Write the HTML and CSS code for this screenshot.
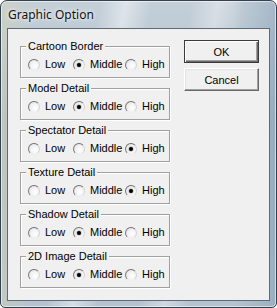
FILE: index.html
```html
<!DOCTYPE html>
<html>
<head>
<meta charset="utf-8">
<link rel="stylesheet" href="styles.css">
</head>
<body>
<div class="window">
  <div class="titlebar"><span class="title">Graphic Option</span></div>
  <div class="client">
    <div class="groups">
      <fieldset class="group">
        <legend>Cartoon Border</legend>
        <div class="row">
          <label class="opt w1"><span class="radio"></span>Low</label>
          <label class="opt w2"><span class="radio on"></span>Middle</label>
          <label class="opt"><span class="radio"></span>High</label>
        </div>
      </fieldset>
      <fieldset class="group">
        <legend>Model Detail</legend>
        <div class="row">
          <label class="opt w1"><span class="radio"></span>Low</label>
          <label class="opt w2"><span class="radio on"></span>Middle</label>
          <label class="opt"><span class="radio"></span>High</label>
        </div>
      </fieldset>
      <fieldset class="group">
        <legend>Spectator Detail</legend>
        <div class="row">
          <label class="opt w1"><span class="radio"></span>Low</label>
          <label class="opt w2"><span class="radio"></span>Middle</label>
          <label class="opt"><span class="radio on"></span>High</label>
        </div>
      </fieldset>
      <fieldset class="group">
        <legend>Texture Detail</legend>
        <div class="row">
          <label class="opt w1"><span class="radio"></span>Low</label>
          <label class="opt w2"><span class="radio"></span>Middle</label>
          <label class="opt"><span class="radio on"></span>High</label>
        </div>
      </fieldset>
      <fieldset class="group">
        <legend>Shadow Detail</legend>
        <div class="row">
          <label class="opt w1"><span class="radio"></span>Low</label>
          <label class="opt w2"><span class="radio on"></span>Middle</label>
          <label class="opt"><span class="radio"></span>High</label>
        </div>
      </fieldset>
      <fieldset class="group">
        <legend>2D Image Detail</legend>
        <div class="row">
          <label class="opt w1"><span class="radio"></span>Low</label>
          <label class="opt w2"><span class="radio on"></span>Middle</label>
          <label class="opt"><span class="radio"></span>High</label>
        </div>
      </fieldset>
    </div>
    <div class="buttons">
      <button class="btn default">OK</button>
      <button class="btn">Cancel</button>
    </div>
  </div>
</div>
</body>
</html>
```

FILE: styles.css
```css
html, body {
  margin: 0;
  padding: 0;
  background: #fff;
}

.window {
  box-sizing: border-box;
  width: 277px;
  height: 308px;
  border: 1px solid #34424f;
  border-radius: 7px 7px 5px 5px;
  padding: 0 6px 6px;
  background:
    linear-gradient(100deg, rgba(255,255,255,0) 30%, rgba(255,255,255,0.45) 38%, rgba(255,255,255,0) 46%, rgba(255,255,255,0) 58%, rgba(255,255,255,0.35) 66%, rgba(255,255,255,0) 74%),
    linear-gradient(90deg, rgba(220,214,170,0.35) 0%, rgba(220,214,170,0) 12%, rgba(0,0,0,0) 85%, rgba(110,140,170,0.35) 100%),
    linear-gradient(180deg, #c4cfd8 0%, #aebdca 40%, #b5c3cf 100%);
  box-shadow: inset 0 0 0 1px rgba(255,255,255,0.55);
  overflow: hidden;
}

.titlebar {
  height: 27px;
  display: flex;
  align-items: center;
  padding-left: 1px;
}

.title {
  font-family: "Noto Sans", "Open Sans", sans-serif;
  font-size: 12px;
  color: #111;
  text-shadow: 0 0 6px rgba(255,255,255,0.9), 0 0 3px rgba(255,255,255,0.8);
  padding-bottom: 1px;
}

.client {
  box-sizing: border-box;
  height: 273px;
  border: 1px solid #5c6b78;
  background: #f0f0f0;
  display: flex;
  padding: 11px 0 0 12px;
  font-family: "Liberation Sans", Arial, sans-serif;
  font-size: 11px;
  color: #000;
}

.groups {
  display: flex;
  flex-direction: column;
  gap: 4px;
}

.group {
  box-sizing: border-box;
  width: 150px;
  height: 38px;
  margin: 0;
  padding: 5px 0 0 7px;
  border: 1px solid #a0a0a0;
  box-shadow: inset 1px 1px 0 #fff, 1px 1px 0 #fff;
  min-width: 0;
}

.group legend {
  padding: 0 2px;
  margin-left: -2px;
  line-height: 13px;
  background: #f0f0f0;
}

.row {
  display: flex;
  align-items: center;
  height: 13px;
  line-height: 13px;
}

.opt {
  display: flex;
  align-items: center;
}

.w1 { width: 45px; }
.w2 { width: 52px; }

.radio {
  box-sizing: border-box;
  width: 12px;
  height: 12px;
  border-radius: 50%;
  border: 1px solid;
  border-color: #6f6f6f #d4d4d4 #ececec #7a7a7a;
  background: radial-gradient(circle at 60% 60%, #ffffff 0%, #f3f3f3 45%, #d9d9d9 100%);
  margin-right: 5px;
  display: flex;
  align-items: center;
  justify-content: center;
}

.radio.on::after {
  content: "";
  width: 4px;
  height: 4px;
  border-radius: 50%;
  background: #000;
  box-shadow: 0 0 1px 0.5px rgba(0,0,0,0.35);
}

.buttons {
  display: flex;
  flex-direction: column;
  gap: 5px;
  margin-left: 14px;
}

.btn {
  box-sizing: border-box;
  width: 75px;
  height: 23px;
  margin: 0;
  padding: 0;
  font-family: "Liberation Sans", Arial, sans-serif;
  font-size: 11px;
  color: #000;
  background: #f0f0f0;
  border: 1px solid;
  border-color: #ffffff #696969 #696969 #ffffff;
  box-shadow: inset -1px -1px 0 #a0a0a0, inset 1px 1px 0 #e3e3e3;
}

.btn.default {
  border: 1px solid #3a3a3a;
  box-shadow: inset 1px 1px 0 #fff, inset -1px -1px 0 #696969, inset -2px -2px 0 #a0a0a0;
}
```
